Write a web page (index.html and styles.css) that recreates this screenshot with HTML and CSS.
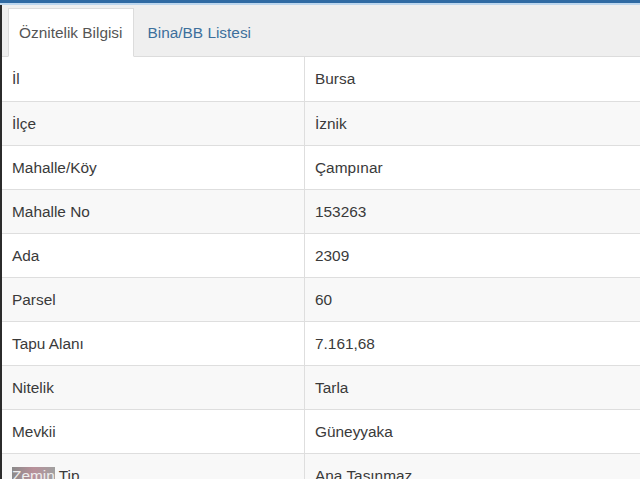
FILE: index.html
```html
<!DOCTYPE html>
<html>
<head>
  <link rel="stylesheet" href="styles.css">
</head>
<body>
  <div class="topbar"></div>
  <div class="panel">
    <ul class="tabs">
      <li class="tab active">Öznitelik Bilgisi</li>
      <li class="tab">Bina/BB Listesi</li>
    </ul>
    <table class="info">
      <tr><td>İl</td><td>Bursa</td></tr>
      <tr><td>İlçe</td><td>İznik</td></tr>
      <tr><td>Mahalle/Köy</td><td>Çampınar</td></tr>
      <tr><td>Mahalle No</td><td>153263</td></tr>
      <tr><td>Ada</td><td>2309</td></tr>
      <tr><td>Parsel</td><td>60</td></tr>
      <tr><td>Tapu Alanı</td><td>7.161,68</td></tr>
      <tr><td>Nitelik</td><td>Tarla</td></tr>
      <tr><td>Mevkii</td><td>Güneyyaka</td></tr>
      <tr><td><span class="smudge">Zemin</span> Tip</td><td>Ana Taşınmaz</td></tr>
    </table>
  </div>
</body>
</html>
```

FILE: styles.css
```css
body {
  margin: 0;
  font-family: "Liberation Sans", Arial, sans-serif;
  font-size: 15.4px;
  color: #3a3a3a;
  background: #fff;
  overflow: hidden;
}
.topbar {
  height: 3px;
  background: #2f6aa3;
  border-bottom: 2px solid #bcd6ee;
}
.panel {
  border-left: 2px solid #2b2b2b;
}
.tabs {
  list-style: none;
  margin: 0;
  padding: 3px 0 0 6px;
  display: flex;
  background: #efefef;
  border-bottom: 1px solid #dcdcdc;
  height: 48px;
}
.tab {
  padding: 0 10px;
  line-height: 47px;
  color: #3d6f9c;
  margin-bottom: -1px;
  border: 1px solid transparent;
  margin-right: 3px;
}
.tab.active {
  background: #fff;
  color: #555;
  border-color: #dcdcdc;
  border-bottom-color: #fff;
}
.info {
  width: 100%;
  border-collapse: collapse;
}
.info td {
  height: 43px;
  padding: 0 10px;
  border-top: 1px solid #dedede;
  vertical-align: middle;
}
.info tr:first-child td {
  border-top: 0;
  height: 44px;
}
.info td:first-child {
  width: 282px;
  border-right: 1px solid #dedede;
}
.info tr:nth-child(even) td {
  background: #f8f8f8;
}
.smudge {
  background: linear-gradient(90deg, #8a8a8a 0%, #b9909a 50%, #a0a0a0 100%);
  color: #eee;
}
```
